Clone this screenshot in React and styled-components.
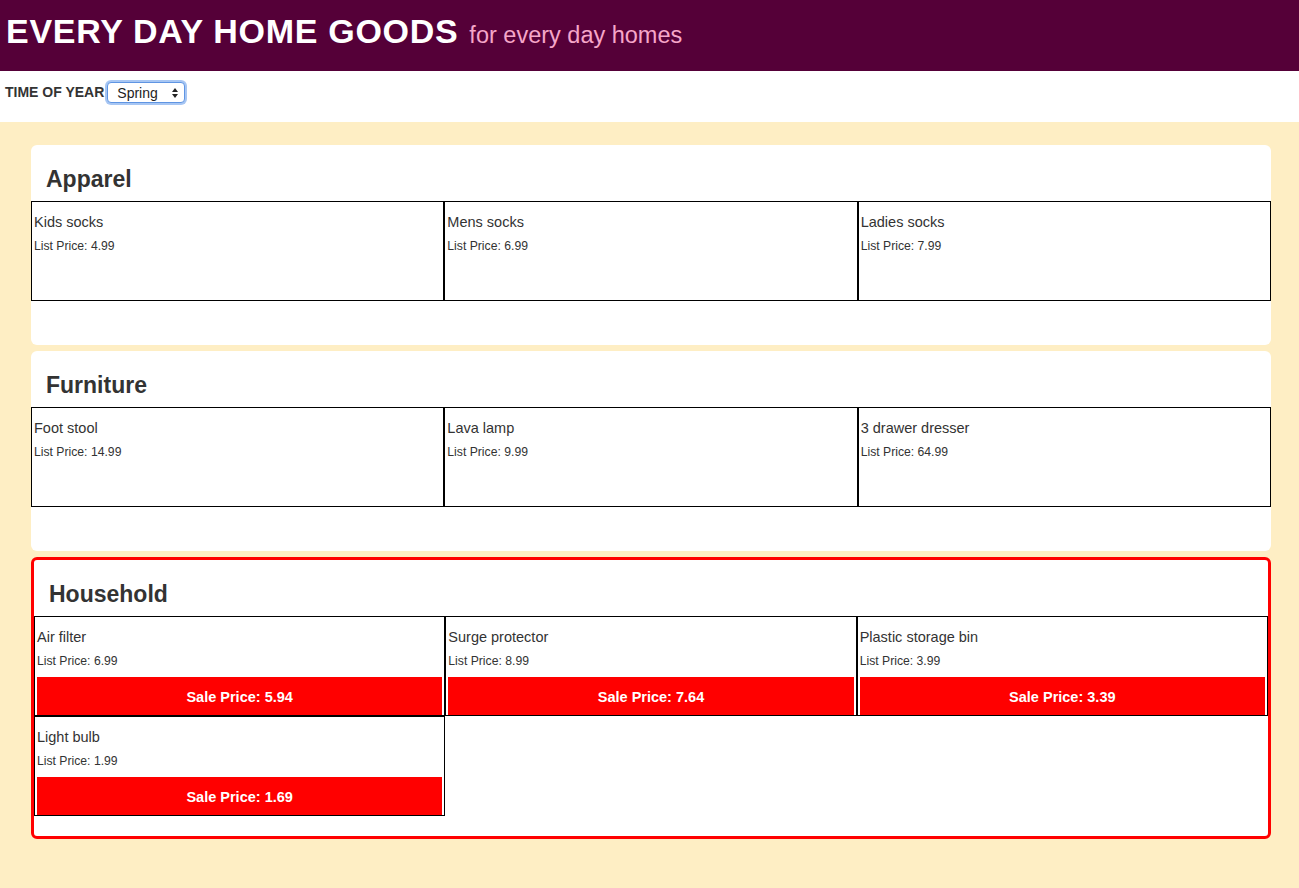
import React from "react";
import styled, { createGlobalStyle } from "styled-components";

const categories = [
  {
    name: "Apparel",
    items: [
      { name: "Kids socks", price: 4.99 },
      { name: "Mens socks", price: 6.99 },
      { name: "Ladies socks", price: 7.99 },
    ],
  },
  {
    name: "Furniture",
    items: [
      { name: "Foot stool", price: 14.99 },
      { name: "Lava lamp", price: 9.99 },
      { name: "3 drawer dresser", price: 64.99 },
    ],
  },
  {
    name: "Household",
    onSale: true,
    items: [
      { name: "Air filter", price: 6.99, sale: 5.94 },
      { name: "Surge protector", price: 8.99, sale: 7.64 },
      { name: "Plastic storage bin", price: 3.99, sale: 3.39 },
      { name: "Light bulb", price: 1.99, sale: 1.69 },
    ],
  },
];

const GlobalStyle = createGlobalStyle`
  html, body {
    margin: 0;
    padding: 0;
    background: #feeec4;
  }
  body {
    font-family: "Liberation Sans", Arial, sans-serif;
    color: #333;
  }
`;

export default function App() {
  return (
    <>
      <GlobalStyle />
      <Header>
        <Title>EVERY DAY HOME GOODS</Title>
        <Tagline>for every day homes</Tagline>
      </Header>
      <Toolbar>
        <Label>TIME OF YEAR</Label>
        <SelectWrap>
          <Select defaultValue="Spring">
            <option>Spring</option>
            <option>Summer</option>
            <option>Fall</option>
            <option>Winter</option>
          </Select>
          <Arrows viewBox="0 0 8 12" width="8" height="12">
            <path d="M4 1 L7 5 L1 5 Z" fill="#222" />
            <path d="M4 11 L7 7 L1 7 Z" fill="#222" />
          </Arrows>
        </SelectWrap>
      </Toolbar>
      <Main>
        {categories.map((cat) => (
          <Panel key={cat.name} $sale={cat.onSale}>
            <Heading>{cat.name}</Heading>
            <Grid>
              {cat.items.map((item) => (
                <Cell key={item.name}>
                  <ItemName>{item.name}</ItemName>
                  <ListPrice>List Price: {item.price}</ListPrice>
                  {item.sale && <SaleBar>Sale Price: {item.sale}</SaleBar>}
                </Cell>
              ))}
            </Grid>
          </Panel>
        ))}
      </Main>
    </>
  );
}

const Header = styled.header`
  height: 71px;
  box-sizing: border-box;
  background: #550038;
  padding: 14px 6px 0;
  display: flex;
  align-items: baseline;
`;

const Title = styled.h1`
  margin: 0;
  font-size: 34px;
  line-height: 34px;
  font-weight: bold;
  color: #fff;
  letter-spacing: 0.7px;
`;

const Tagline = styled.span`
  margin-left: 11px;
  font-size: 23.5px;
  color: #f6a6c9;
`;

const Toolbar = styled.div`
  height: 51px;
  box-sizing: border-box;
  background: #fff;
  padding: 11px 5px 0;
  display: flex;
  align-items: flex-start;
`;

const Label = styled.span`
  font-size: 14px;
  font-weight: bold;
  line-height: 21px;
  margin-right: 3px;
`;

const SelectWrap = styled.span`
  position: relative;
  display: inline-block;
`;

const Select = styled.select`
  appearance: none;
  -webkit-appearance: none;
  width: 78px;
  height: 21px;
  box-sizing: border-box;
  padding: 0 0 0 9px;
  font-family: "Liberation Sans", Arial, sans-serif;
  font-size: 14px;
  color: #222;
  background: #fff;
  border: 1px solid #5f95e3;
  border-radius: 4px;
  box-shadow: 0 0 0 2px #a7c6f3;
  outline: none;
`;

const Arrows = styled.svg`
  position: absolute;
  right: 6px;
  top: 5px;
  pointer-events: none;
`;

const Main = styled.main`
  padding: 23px 28px 50px 31px;
  display: flex;
  flex-direction: column;
  gap: 6px;
`;

const Panel = styled.section`
  background: #fff;
  border-radius: 6px;
  border: ${(p) => (p.$sale ? "3px solid #ff0000" : "none")};
  padding-bottom: ${(p) => (p.$sale ? "20px" : "44px")};
`;

const Heading = styled.h2`
  margin: 0;
  padding: 20px 15px 8px;
  font-size: 23px;
  line-height: 28px;
  font-weight: bold;
  color: #333;
`;

const Grid = styled.div`
  display: grid;
  grid-template-columns: repeat(3, 1fr);
`;

const Cell = styled.div`
  height: 100px;
  box-sizing: border-box;
  border: 1px solid #000;
  padding: 0 2px;
  display: flex;
  flex-direction: column;
  min-width: 0;
`;

const ItemName = styled.div`
  margin-top: 12px;
  font-size: 14.5px;
  line-height: 17px;
`;

const ListPrice = styled.div`
  margin-top: 8px;
  font-size: 12.2px;
  line-height: 14px;
`;

const SaleBar = styled.div`
  margin-top: 9px;
  height: 38px;
  background: #ff0000;
  color: #fff;
  font-weight: bold;
  font-size: 14.5px;
  line-height: 40px;
  text-align: center;
`;
